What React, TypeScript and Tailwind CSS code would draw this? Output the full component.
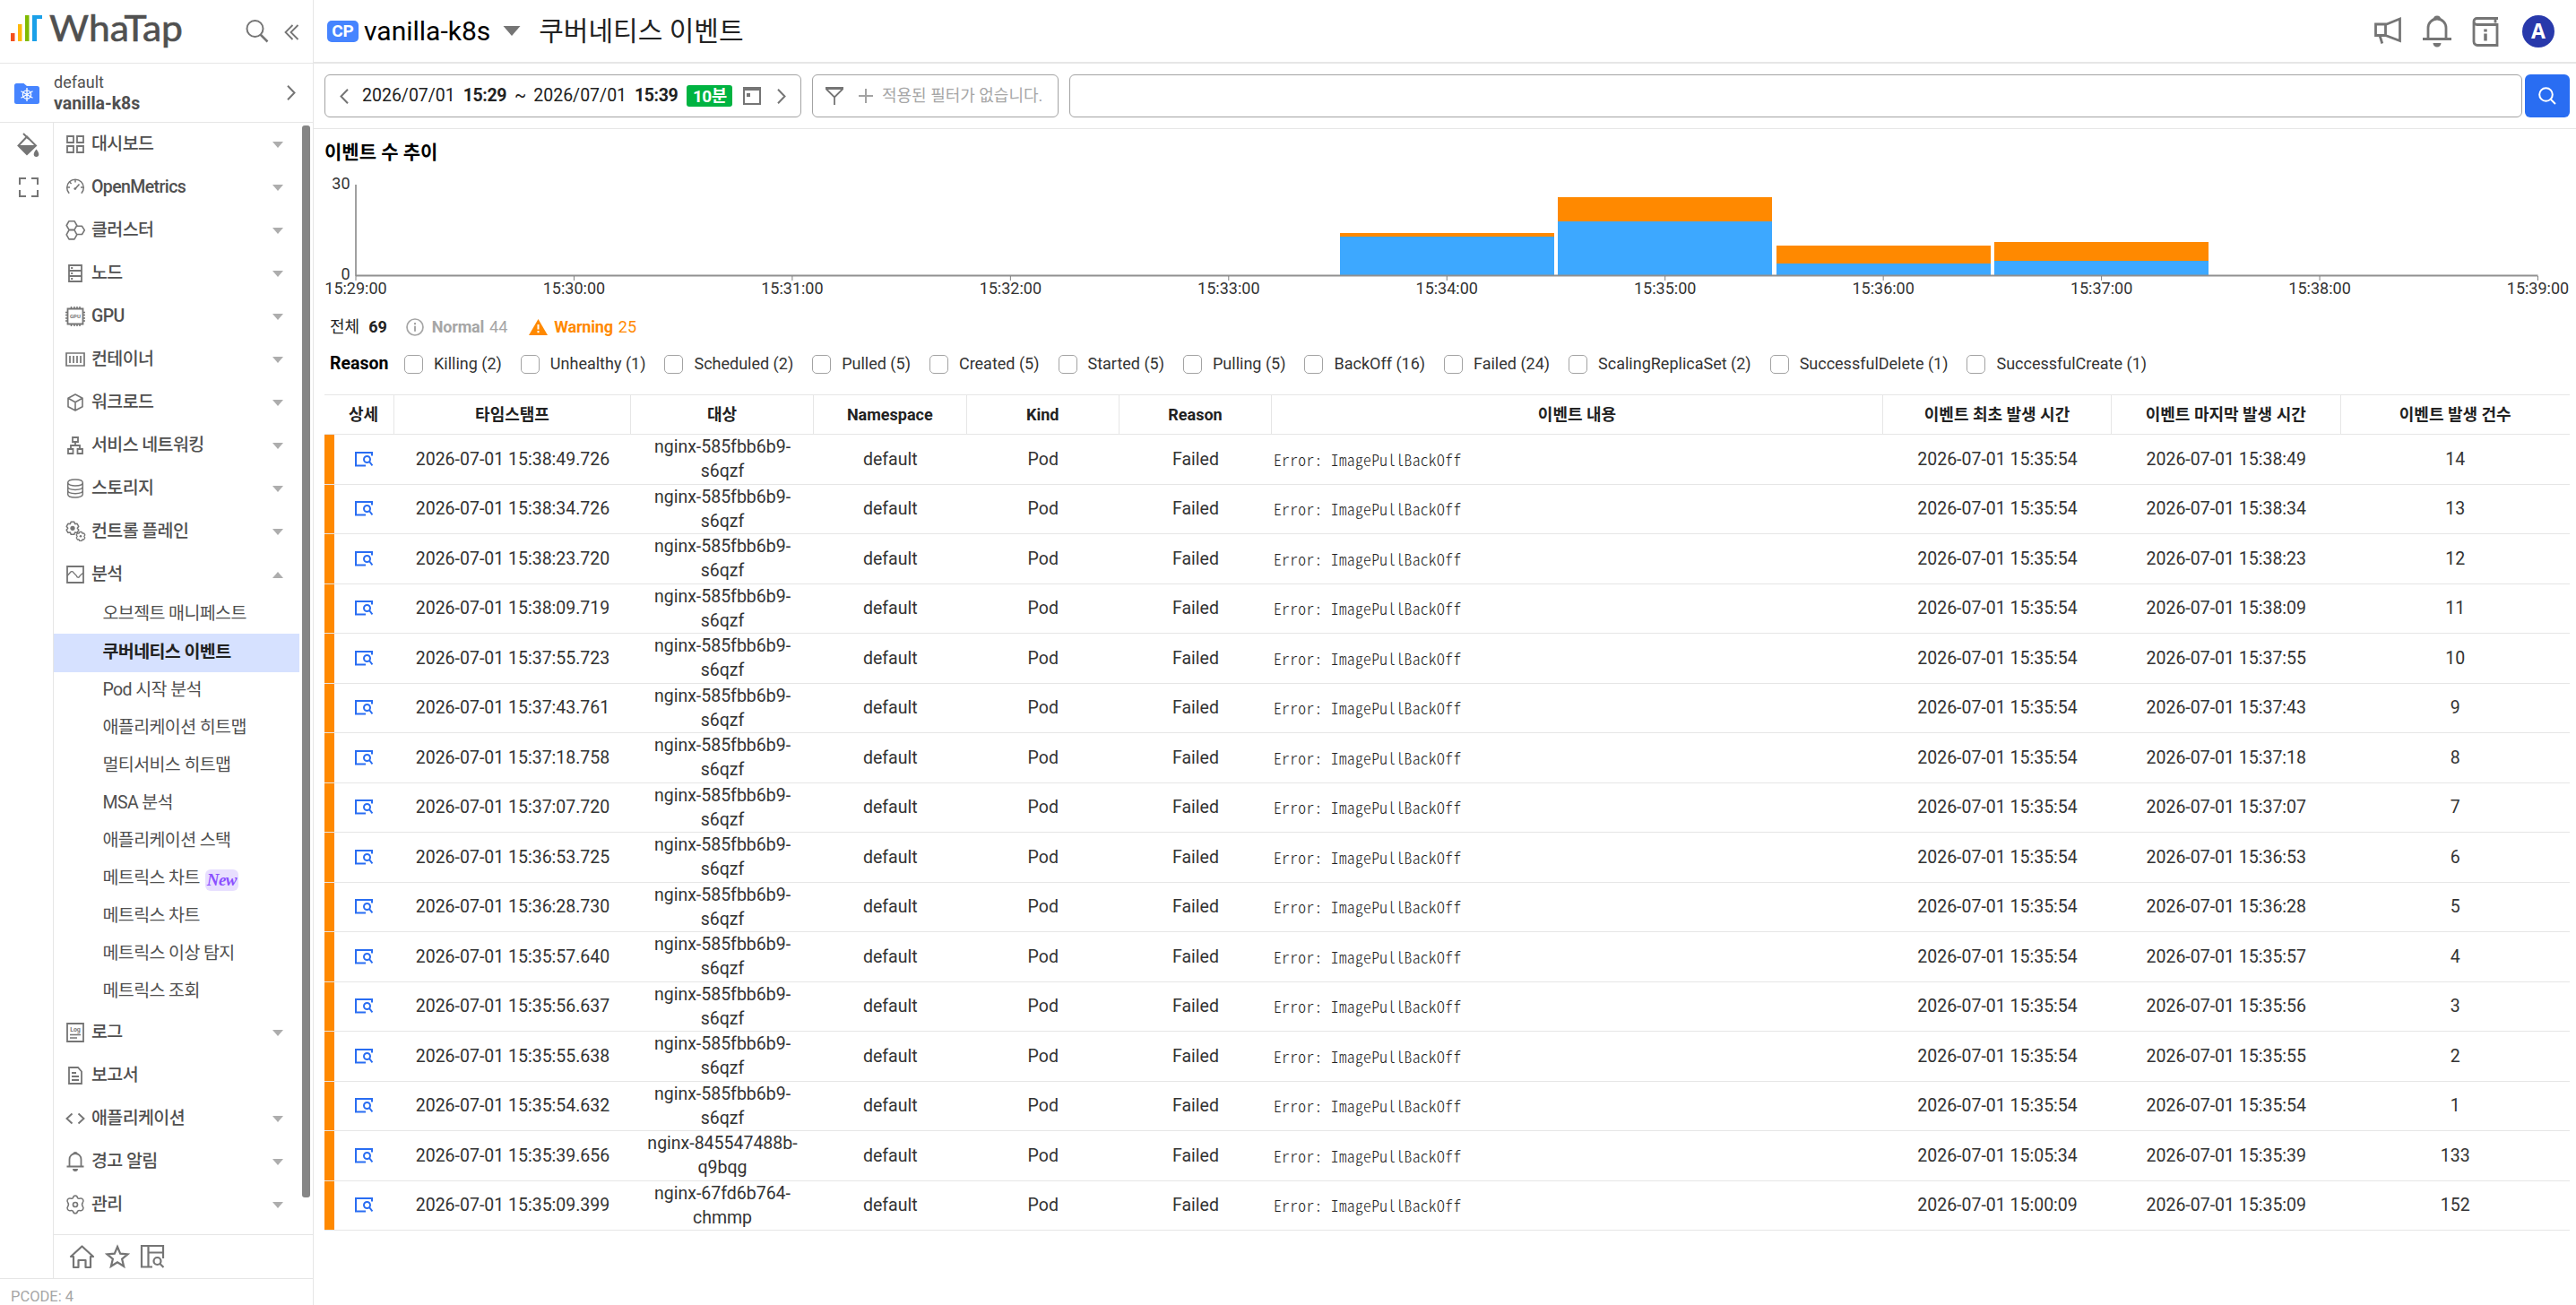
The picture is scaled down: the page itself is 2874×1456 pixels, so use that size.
import type { ReactNode } from "react";
import clsx from "clsx";

type MenuItem = {
  label: string;
  icon: ReactNode;
  arrow?: "up" | "down";
};

const TOP_MENU: MenuItem[] = [
  {
    label: "대시보드",
    arrow: "down",
    icon: <path d="M3 3h7v7H3zM14 3h7v7h-7zM3 14h7v7H3zM14 14h7v7h-7z" strokeWidth="1.800" />,
  },
  {
    label: "OpenMetrics",
    arrow: "down",
    icon: (
      <>
        <path d="M5.2 18.8a9.3 9.3 0 1 1 13.6 0" strokeWidth="1.5" />
        <path d="M12 3.5v3M3 12h3M18 12h3M5.6 6l2 2" strokeWidth="1.5" />
        <path d="M12 13.5l4.5-5" strokeWidth="1.6" />
        <circle cx="11.8" cy="13.6" r="1.4" fill="currentColor" stroke="none" />
      </>
    ),
  },
  {
    label: "클러스터",
    arrow: "down",
    icon: (
      <path
        d="M5 1.7h6l2.8 4.8-2.8 4.900H5L2.200 6.500zM5 11.700h6l2.800 5.100-2.800 5.100H5l-2.800-5.100zM13.500 7.300h6l2.800 4.600-2.800 4.600h-6"
        strokeWidth="1.600"
        strokeLinejoin="round"
      />
    ),
  },
  {
    label: "노드",
    arrow: "down",
    icon: (
      <>
        <path d="M5 3h14v18H5zM5 9h14M5 15h14" strokeWidth="1.8" />
        <path d="M7.200 6h2M7.200 12h2M7.200 18h2" strokeWidth="1.800" />
      </>
    ),
  },
  {
    label: "GPU",
    arrow: "down",
    icon: (
      <>
        <path d="M3.500 3.500h17v17h-17z" strokeWidth="1.800" />
        <path
          d="M7.500 1v2.500M11 1v2.500M14 1v2.500M17 1v2.500M7.500 20.500V23M11 20.500V23M14 20.500V23M17 20.500V23M1 7.500h2.500M1 10.500h2.500M1 14h2.500M1 17h2.500M20.500 7.500H23M20.500 10.500H23M20.500 14H23M20.500 17H23"
          strokeWidth="1.500"
        />
        <text x="12" y="14" fontSize="6" fontWeight="700" textAnchor="middle" fill="currentColor" stroke="none">
          GPU
        </text>
      </>
    ),
  },
  {
    label: "컨테이너",
    arrow: "down",
    icon: <path d="M2 5h20v14H2zM6 8v8M10 8v8M14 8v8M18 8v8" strokeWidth="1.700" />,
  },
  {
    label: "워크로드",
    arrow: "down",
    icon: (
      <path d="M12 3l8 4.200v9.500L12 21l-8-4.300V7.200zM4 7.200l8 4.500 8-4.500M12 11.700V21" strokeWidth="1.600" strokeLinejoin="round" />
    ),
  },
  {
    label: "서비스 네트워킹",
    arrow: "down",
    icon: <path d="M9 3h6v5H9zM4 16h5.500v5H4zM14.500 16H20v5h-5.500zM12 8v4M7 16v-4h10v4" strokeWidth="1.800" />,
  },
  {
    label: "스토리지",
    arrow: "down",
    icon: (
      <path
        d="M3.700 5.500c0-4.700 16.600-4.700 16.600 0s-16.600 4.700-16.600 0v13c0 4.700 16.600 4.700 16.600 0v-13M3.700 10c0 4.500 16.600 4.500 16.600 0M3.700 14.300c0 4.500 16.600 4.500 16.600 0"
        strokeWidth="1.500"
      />
    ),
  },
  {
    label: "컨트롤 플레인",
    arrow: "down",
    icon: (
      <>
        <path
          d="M7.200 1.300h3.600l.8 2.300 2.500-.3 1.700 3-1.500 2 1.500 2-1.700 3-2.500-.3-.8 2.300H7.200l-.8-2.300-2.500.3-1.700-3 1.500-2-1.500-2 1.700-3 2.500.3z"
          strokeWidth="1.500"
          strokeLinejoin="round"
        />
        <circle cx="9" cy="8.300" r="2.600" fill="currentColor" stroke="none" />
        <path
          d="M16.800 12.500h2.400l.6 1.500 1.800-.1 1.200 2-1 1.600 1 1.500-1.200 2-1.800-.1-.6 1.500h-2.400l-.6-1.500-1.800.1-1.200-2 1-1.500-1-1.600 1.200-2 1.800.1z"
          strokeWidth="1.300"
          strokeLinejoin="round"
          fill="#fff"
        />
        <circle cx="18" cy="17.300" r="1.300" fill="currentColor" stroke="none" />
      </>
    ),
  },
  {
    label: "분석",
    arrow: "up",
    icon: (
      <>
        <path d="M3 3h18v18H3z" strokeWidth="1.800" />
        <path d="M3 13.500l3.500-4a2 2 0 0 1 3.500.5l3.500 3.500a1.500 1.500 0 0 0 3.500 0L21 10" strokeWidth="1.300" />
      </>
    ),
  },
];

const SUB_MENU = [
  "오브젝트 매니페스트",
  "쿠버네티스 이벤트",
  "Pod 시작 분석",
  "애플리케이션 히트맵",
  "멀티서비스 히트맵",
  "MSA 분석",
  "애플리케이션 스택",
  "메트릭스 차트 New",
  "메트릭스 차트",
  "메트릭스 이상 탐지",
  "메트릭스 조회",
];

const BOTTOM_MENU: MenuItem[] = [
  {
    label: "로그",
    arrow: "down",
    icon: (
      <>
        <path d="M3 2h18v20H3z" strokeWidth="1.800" />
        <path d="M6 14.500h12M6 18h8" strokeWidth="1.500" />
        <text x="12" y="11" fontSize="7" fontWeight="700" textAnchor="middle" fill="currentColor" stroke="none">
          Log
        </text>
      </>
    ),
  },
  {
    label: "보고서",
    icon: <path d="M5 3h10l4 4.500V21H5zM8 9h5M8 13h8M8 17h8" strokeWidth="1.800" />,
  },
  {
    label: "애플리케이션",
    arrow: "down",
    icon: <path d="M8.500 6.500L2.500 12l6 5.500M15.500 6.500l6 5.500-6 5.500" strokeWidth="1.900" />,
  },
  {
    label: "경고 알림",
    arrow: "down",
    icon: (
      <>
        <path d="M2.500 17.500h19M5.500 17.500V9.500a6.500 6.500 0 0 1 13 0v8" strokeWidth="1.800" />
        <path d="M9.500 3a2.500 2 0 0 1 5 0zM9 20h6a3 3 0 0 1-6 0z" fill="currentColor" stroke="none" />
      </>
    ),
  },
  {
    label: "관리",
    arrow: "down",
    icon: (
      <>
        <path
          d="M9.500 4.500C10 1.300 14 1.300 14.500 4.500c.8 1 1.500 1 3 .6 2.800-.5 4.500 2.600 2.800 4.600-1 1.300-1 2.800 0 4.400 1.700 2-.2 5.200-2.800 4.600-1.500-.3-2.200-.2-3 .8-.7 3.100-4.300 3.100-5 0-.8-1-1.500-1.100-3-.8-2.600.6-4.500-2.600-2.800-4.600 1-1.600 1-3.100 0-4.400C2 7.700 3.700 4.600 6.500 5.100c1.500.4 2.200.4 3-.6z"
          strokeWidth="1.500"
        />
        <circle cx="12" cy="12" r="2.500" strokeWidth="1.700" />
      </>
    ),
  },
];

const REASONS = [
  "Killing (2)",
  "Unhealthy (1)",
  "Scheduled (2)",
  "Pulled (5)",
  "Created (5)",
  "Started (5)",
  "Pulling (5)",
  "BackOff (16)",
  "Failed (24)",
  "ScalingReplicaSet (2)",
  "SuccessfulDelete (1)",
  "SuccessfulCreate (1)",
];

const COLUMNS = [
  "상세",
  "타임스탬프",
  "대상",
  "Namespace",
  "Kind",
  "Reason",
  "이벤트 내용",
  "이벤트 최초 발생 시간",
  "이벤트 마지막 발생 시간",
  "이벤트 발생 건수",
];

const POD = "nginx-585fbb6b9-s6qzf";

// time with millis, target, first seen, last seen, count
const EVENTS: [string, string, string, string, number][] = [
  ["15:38:49.726", POD, "15:35:54", "15:38:49", 14],
  ["15:38:34.726", POD, "15:35:54", "15:38:34", 13],
  ["15:38:23.720", POD, "15:35:54", "15:38:23", 12],
  ["15:38:09.719", POD, "15:35:54", "15:38:09", 11],
  ["15:37:55.723", POD, "15:35:54", "15:37:55", 10],
  ["15:37:43.761", POD, "15:35:54", "15:37:43", 9],
  ["15:37:18.758", POD, "15:35:54", "15:37:18", 8],
  ["15:37:07.720", POD, "15:35:54", "15:37:07", 7],
  ["15:36:53.725", POD, "15:35:54", "15:36:53", 6],
  ["15:36:28.730", POD, "15:35:54", "15:36:28", 5],
  ["15:35:57.640", POD, "15:35:54", "15:35:57", 4],
  ["15:35:56.637", POD, "15:35:54", "15:35:56", 3],
  ["15:35:55.638", POD, "15:35:54", "15:35:55", 2],
  ["15:35:54.632", POD, "15:35:54", "15:35:54", 1],
  ["15:35:39.656", "nginx-845547488b-q9bqg", "15:05:34", "15:35:39", 133],
  ["15:35:09.399", "nginx-67fd6b764-chmmp", "15:00:09", "15:35:09", 152],
];

const GRID = "grid grid-cols-[78px_264px_204px_170.5px_170.5px_170px_682px_255px_255.5px_255.5px]";

// minute index, normal, warning
const BARS = [
  { minute: 5, normal: 13, warning: 1 },
  { minute: 6, normal: 18, warning: 8 },
  { minute: 7, normal: 4, warning: 6 },
  { minute: 8, normal: 5, warning: 6 },
];

const Caret = ({ up }: { up?: boolean }) => (
  <svg width="12" height="7" viewBox="0 0 12 7" className="text-[#adadad]">
    <path d={up ? "M0 7h12L6 0z" : "M0 0h12L6 7z"} fill="currentColor" />
  </svg>
);

const MenuRow = ({ item }: { item: MenuItem }) => (
  <div className="flex h-12 items-center pl-3 pr-[21px]">
    <svg width="24" height="24" viewBox="0 0 24 24" fill="none" stroke="currentColor" strokeWidth="2" className="text-[#757575]">
      {item.icon}
    </svg>
    <span className="ml-[6px] flex-1 text-[19.5px] leading-none font-medium tracking-[-0.6px] text-[#505050]">{item.label}</span>
    {item.arrow && <Caret up={item.arrow === "up"} />}
  </div>
);

const SubRow = ({ label }: { label: string }) => {
  const isNew = label.endsWith(" New");
  const active = label === "쿠버네티스 이벤트";
  return (
    <div
      className={clsx(
        "flex w-[274px] items-center pb-[2px] pl-[54.5px] text-[19.5px] leading-none tracking-[-0.6px]",
        active ? "h-[43px] bg-[#d6e1ff] font-bold text-[#222]" : "h-[42px] text-[#505050]"
      )}
    >
      {isNew ? label.replace(" New", "") : label}
      {isNew && (
        <span className="mt-[3px] ml-[6px] flex h-6 w-[37px] items-center justify-center rounded-md bg-[#e8dfff] font-['Liberation_Serif',serif] text-[19px] font-bold italic text-[#8b50ff]">
          New
        </span>
      )}
    </div>
  );
};

const Sidebar = () => (
  <aside className="flex h-full w-[350px] shrink-0 flex-col border-r border-[#e6e6e6]">
    <div className="flex h-[71px] shrink-0 items-center border-b border-[#e6e6e6]">
      <svg width="210" height="70" viewBox="0 0 210 70">
        <path d="M12 37h4.500v9H12z" fill="#f4511e" />
        <path d="M20 27h4.500v19H20z" fill="#ffb90a" />
        <path d="M28 17h4.500v29H28z" fill="#80ba01" />
        <path d="M36 17h11v4h-6v25h-5z" fill="#1ba0e8" />
        <text
          x="55"
          y="46"
          fontFamily="Lato, sans-serif"
          fontSize="40"
          fontWeight="400"
          textLength="149"
          lengthAdjust="spacingAndGlyphs"
          fill="#505050"
          stroke="#505050"
          strokeWidth="0.6"
        >
          WhaTap
        </text>
      </svg>
      <svg width="26" height="26" viewBox="0 0 26 26" fill="none" stroke="#757575" strokeWidth="2" className="ml-16">
        <circle cx="10.500" cy="10" r="9" />
        <path d="M16.500 16.500l8 8" strokeWidth="2.500" />
      </svg>
      <svg width="17" height="18" viewBox="0 0 17 18" fill="none" stroke="#757575" strokeWidth="1.800" className="ml-[17px] mt-px">
        <path d="M9.500 1L1.500 9l8 8M15.500 1l-8 8 8 8" />
      </svg>
    </div>

    <div className="flex h-[66px] shrink-0 items-center border-b border-[#e6e6e6] pl-4 pr-[19px]">
      <svg width="28" height="24" viewBox="0 0 28 24">
        <path d="M2.500 1h8l3.500 3h11.500A2.500 2.500 0 0 1 28 6.500v15a2.500 2.500 0 0 1-2.500 2.500h-23A2.500 2.500 0 0 1 0 21.500v-18A2.500 2.500 0 0 1 2.500 1z" fill="#4684ff" />
        <g stroke="#fff" fill="none" strokeWidth="1.300">
          <circle cx="14" cy="13.500" r="4.600" />
          <path d="M14 6v15M7.500 9.800l13 7.400M7.500 17.200l13-7.400" />
        </g>
      </svg>
      <div className="ml-4 flex-1 text-[#505050]">
        <div className="text-[18px] leading-6">default</div>
        <div className="text-[19.5px] leading-6 font-bold">vanilla-k8s</div>
      </div>
      <svg width="10" height="17" viewBox="0 0 10 17" fill="none" stroke="#757575" strokeWidth="2">
        <path d="M1 .8l7.500 7.700L1 16.200" />
      </svg>
    </div>

    <div className="flex min-h-0 flex-1">
      <div className="flex w-[60px] shrink-0 flex-col items-center border-r border-[#e6e6e6] pt-[11px]">
        <svg width="26" height="28" viewBox="0 0 26 28" className="ml-1 text-[#757575]">
          <path d="M7 1l6 6" stroke="currentColor" strokeWidth="2" />
          <path d="M11 4.500L21 14.500 11 24 1.500 14.500z" fill="none" stroke="currentColor" strokeWidth="2" />
          <path d="M2 14h18.500L11 24z" fill="currentColor" />
          <path d="M21.500 18.500c4 4.500 3.500 8.500 0 8.500s-4-4 0-8.500z" fill="currentColor" />
        </svg>
        <svg width="24" height="24" viewBox="0 0 24 24" fill="none" stroke="#757575" strokeWidth="2" className="mt-[21px] ml-1">
          <path d="M2 9V2h7M15 2h7v7M22 15v7h-7M9 22H2v-7" />
        </svg>
      </div>
      <div className="flex min-w-0 flex-1 flex-col">
        <div className="flex flex-1">
          <div className="w-[277px]">
            {TOP_MENU.map((item) => (
              <MenuRow key={item.label} item={item} />
            ))}
            {SUB_MENU.map((label) => (
              <SubRow key={label} label={label} />
            ))}
            {BOTTOM_MENU.map((item) => (
              <MenuRow key={item.label} item={item} />
            ))}
          </div>
          <div className="mt-[3px] h-[1196px] w-[9px] rounded-[3px] bg-[#868686]" />
        </div>
        <div className="flex h-[49px] shrink-0 items-center gap-[11px] border-t border-[#e6e6e6] pl-[17px] text-[#757575]">
          <svg width="29" height="28" viewBox="0 0 29 28" fill="none" stroke="currentColor" strokeWidth="2.200" strokeLinejoin="round">
            <path d="M2 14L14.500 2.500 27 14h-3v12h-5.500v-8h-8v8H5V14z" />
          </svg>
          <svg width="28" height="28" viewBox="0 0 28 28" fill="none" stroke="currentColor" strokeWidth="2.200">
            <path d="M14 3l3.200 7.700 8.300.6-6.400 5.300 2 8.200L14 20.300l-7.100 4.500 2-8.200-6.400-5.300 8.300-.6z" />
          </svg>
          <svg width="28" height="28" viewBox="0 0 28 28" fill="none" stroke="currentColor" strokeWidth="2.200">
            <path d="M14 25.500H2V2h24v14M9.500 2v23M9.500 9.500H26" />
            <circle cx="19.500" cy="19" r="4" />
            <path d="M22.500 22l4 4" />
          </svg>
        </div>
      </div>
    </div>

    <div className="flex h-[30px] shrink-0 items-center border-t border-[#e6e6e6] pt-3 pl-3 text-[16.5px] leading-none text-[#a6a6a6]">
      PCODE: 4
    </div>
  </aside>
);

const Header = () => (
  <header className="flex h-[71px] shrink-0 items-center border-b-2 border-[#e6e6e6] pl-[15px] pr-6">
    <span className="flex h-6 w-[35px] items-center justify-center rounded-[5px] bg-[#4684ff] text-[19px] leading-none font-bold text-white">
      CP
    </span>
    <span className="ml-[6px] text-[30px] leading-none text-black">vanilla-k8s</span>
    <svg width="20" height="11" viewBox="0 0 20 11" className="ml-[14px]">
      <path d="M.5 0h19L10 11z" fill="#757575" />
    </svg>
    <h1 className="ml-5 text-[30px] leading-none text-[#222]">쿠버네티스 이벤트</h1>
    <div className="ml-auto flex items-center gap-[23px] text-[#757575]">
      <svg width="32" height="36" viewBox="0 0 32 36" fill="none" stroke="currentColor" strokeWidth="2.800">
        <path d="M2.500 10h11v12.500h-11zM13.500 10.500L29.500 4v24.500l-16-6M7 22.500l2.800 9" />
      </svg>
      <svg width="32" height="36" viewBox="0 0 32 36" fill="none" stroke="currentColor" strokeWidth="2.800">
        <path d="M0 26.500h32M6 26V14a10 10 0 0 1 20 0v12" />
        <path d="M12 4a4 3.500 0 0 1 8 0zM11.500 31h9a4.500 4.500 0 0 1-9 0z" fill="currentColor" stroke="none" />
      </svg>
      <svg width="30" height="36" viewBox="0 0 30 36" fill="none" stroke="currentColor" strokeWidth="2.800">
        <path d="M29 3.500H5.500a3.500 3.500 0 0 0 0 7H28v23H6a4 4 0 0 1-4-4V7M26 3.500v5" />
        <path d="M15 15.500v3M15 20.500v8" strokeWidth="3.500" />
      </svg>
      <span className="ml-[3px] flex h-9 w-9 items-center justify-center rounded-full bg-[#2839ab] font-['Open_Sans',sans-serif] text-[23px] font-bold text-white">
        A
      </span>
    </div>
  </header>
);

const Toolbar = () => (
  <div className="flex h-[73px] shrink-0 items-center border-b border-[#e6e6e6] pl-3 pr-[7px] text-[19.5px] leading-none text-[#222]">
    <div className="flex h-12 w-[532px] items-center rounded-md border border-[#a3a3a3] pl-4">
      <svg width="10" height="17" viewBox="0 0 10 17" fill="none" stroke="#757575" strokeWidth="2">
        <path d="M9 .8L1.500 8.500 9 16.200" />
      </svg>
      <span className="ml-[15px]">2026/07/01</span>
      <span className="ml-[9px] font-bold tracking-[-0.4px]">15:29</span>
      <span className="ml-[9px]">~</span>
      <span className="ml-[8px]">2026/07/01</span>
      <span className="ml-[9px] font-bold tracking-[-0.4px]">15:39</span>
      <span className="ml-[10px] flex h-6 w-[51px] items-center justify-center rounded-[3px] bg-[#00b341] text-[19px] font-bold tracking-[-0.5px] text-white">
        10분
      </span>
      <svg width="20" height="20" viewBox="0 0 20 20" className="ml-3" fill="none" stroke="#757575" strokeWidth="2">
        <path d="M1 1h18v18H1z" />
        <path d="M0 2h20" strokeWidth="4" />
        <path d="M4 9h4" strokeWidth="4" />
      </svg>
      <svg width="10" height="17" viewBox="0 0 10 17" fill="none" stroke="#757575" strokeWidth="2" className="ml-[18px]">
        <path d="M1 .8l7.500 7.700L1 16.200" />
      </svg>
    </div>
    <div className="ml-3 flex h-12 w-[275px] items-center rounded-md border border-[#a3a3a3] pl-[14px]">
      <svg width="20" height="20" viewBox="0 0 20 20" fill="none" stroke="#757575" strokeWidth="1.800">
        <path d="M0 1.500h20" strokeWidth="3" />
        <path d="M1 2.500l9 9 9-9M10 11v9" />
      </svg>
      <svg width="16" height="16" viewBox="0 0 16 16" stroke="#a3a3a3" strokeWidth="2" className="ml-[17px]">
        <path d="M8 0v16M0 8h16" />
      </svg>
      <span className="ml-[10px] text-[18px] text-[#a6a6a6]">적용된 필터가 없습니다.</span>
    </div>
    <div className="ml-3 h-12 flex-1 rounded-md border border-[#a3a3a3]" />
    <button className="ml-[3px] flex h-12 w-[50px] items-center justify-center rounded-md bg-[#296df2]">
      <svg width="20" height="20" viewBox="0 0 20 20" fill="none" stroke="#fff" strokeWidth="2">
        <circle cx="8.500" cy="8.500" r="7.300" />
        <path d="M13.500 13.500l5.500 5.500" />
      </svg>
    </button>
  </div>
);

const AXIS_X = 47;
const STEP = 243.45;
const BASE = 117.5;
const UNIT = 3.38;

const EventChart = () => (
  <svg width="2524" height="150" viewBox="0 0 2524 150" fontSize="18" fill="#333" className="block">
    {BARS.map(({ minute, normal, warning }) => {
      const x = AXIS_X + STEP * (minute - 0.5) + 2.5;
      return (
        <g key={minute} shapeRendering="crispEdges">
          <rect x={x} y={BASE - normal * UNIT} width="239" height={normal * UNIT} fill="#3da8ff" />
          <rect x={x} y={BASE - (normal + warning) * UNIT} width="239" height={warning * UNIT} fill="#ff8900" />
        </g>
      );
    })}
    <path d={`M${AXIS_X} 16V118`} stroke="#808080" strokeWidth="1.500" />
    <path d={`M${AXIS_X} 117.500h2434.500`} stroke="#909090" strokeWidth="2" />
    {Array.from({ length: 11 }, (_, i) => (
      <g key={i}>
        <path d={`M${AXIS_X + i * STEP} 118v5`} stroke="#808080" strokeWidth="1" />
        <text x={AXIS_X + i * STEP} y="138" textAnchor="middle">
          {`15:${29 + i}:00`}
        </text>
      </g>
    ))}
    <text x="40.500" y="21" textAnchor="end">30</text>
    <text x="40.500" y="122" textAnchor="end">0</text>
  </svg>
);

const Summary = () => (
  <div className="flex h-6 items-center pl-[18px] text-[18px] leading-none text-[#222]">
    <span>전체</span>
    <span className="ml-[10px] font-bold">69</span>
    <svg width="20" height="20" viewBox="0 0 20 20" fill="none" stroke="#a6a6a6" strokeWidth="1.700" className="ml-[21px]">
      <circle cx="10" cy="10" r="9" />
      <path d="M10 5v2.200M10 8.800v6" strokeWidth="2" />
    </svg>
    <span className="ml-[9px] font-bold tracking-[-0.2px] text-[#a6a6a6]">Normal</span>
    <span className="ml-[6px] text-[#a6a6a6]">44</span>
    <svg width="21" height="18" viewBox="0 0 21 18" className="ml-[24px]">
      <path d="M10.500 0L21 18H0z" fill="#ff8900" />
      <path d="M10.500 6v5.500M10.500 13v2.300" stroke="#fff" strokeWidth="2" />
    </svg>
    <span className="ml-[7px] font-bold tracking-[-0.2px] text-[#ff8900]">Warning</span>
    <span className="ml-[6px] text-[#ff8900]">25</span>
  </div>
);

const ReasonFilter = () => (
  <div className="mt-[17px] flex h-6 items-center pl-[18px] leading-none">
    <span className="w-[83px] text-[19.5px] font-bold text-black">Reason</span>
    {REASONS.map((reason) => (
      <label key={reason} className="mr-[21px] flex items-center text-[18px] text-[#333]">
        <span className="mr-3 h-[21px] w-[21px] rounded-[5px] border border-[#a3a3a3]" />
        {reason}
      </label>
    ))}
  </div>
);

const EventTable = () => (
  <div className="mt-[22px] ml-3 w-[2505px] text-[#333]">
    <div className={clsx(GRID, "h-[45px] border-y border-[#e6e6e6] text-[18px] font-bold text-[#222]")}>
      {COLUMNS.map((col, i) => (
        <div
          key={col}
          className={clsx(
            "flex items-center justify-center leading-none",
            i === 0 && "pl-[10px]",
            i < COLUMNS.length - 1 && "border-r border-[#e6e6e6]"
          )}
        >
          {col}
        </div>
      ))}
    </div>
    {EVENTS.map(([time, target, first, last, count]) => (
      <div key={time} className={clsx(GRID, "h-[55.5px] items-center border-b border-[#e6e6e6] text-center text-[19.5px] leading-[27px]")}>
        <div className="flex h-full items-center border-l-[11px] border-[#ff8900] pl-[23px]">
          <svg width="20" height="17" viewBox="0 0 20 17" fill="none" stroke="#296df2" strokeWidth="2">
            <path d="M12 15.500H1V1h18v3.500" />
            <circle cx="13.500" cy="8.500" r="3.500" />
            <path d="M16 11l3.500 4.500" />
          </svg>
        </div>
        <div>2026-07-01 {time}</div>
        <div className="px-4">{target}</div>
        <div>default</div>
        <div>Pod</div>
        <div>Failed</div>
        <div className="pl-[2px] text-left font-['Noto_Sans_CJK_KR',monospace] text-[17.6px] font-light tracking-[0.3px] [font-feature-settings:'hwid'] text-[#222]">
          Error: ImagePullBackOff
        </div>
        <div>2026-07-01 {first}</div>
        <div>2026-07-01 {last}</div>
        <div>{count}</div>
      </div>
    ))}
  </div>
);

export default function App() {
  return (
    <div className="flex h-[1456px] w-[2874px] overflow-hidden bg-white font-['Roboto','Noto_Sans_CJK_KR',sans-serif]">
      <Sidebar />
      <main className="flex min-w-0 flex-1 flex-col">
        <Header />
        <Toolbar />
        <h2 className="mt-4 h-[30px] pl-3 text-[21px] leading-[20px] font-bold text-black">이벤트 수 추이</h2>
        <EventChart />
        <div className="mt-[13px]">
          <Summary />
          <ReasonFilter />
          <EventTable />
        </div>
      </main>
    </div>
  );
}
